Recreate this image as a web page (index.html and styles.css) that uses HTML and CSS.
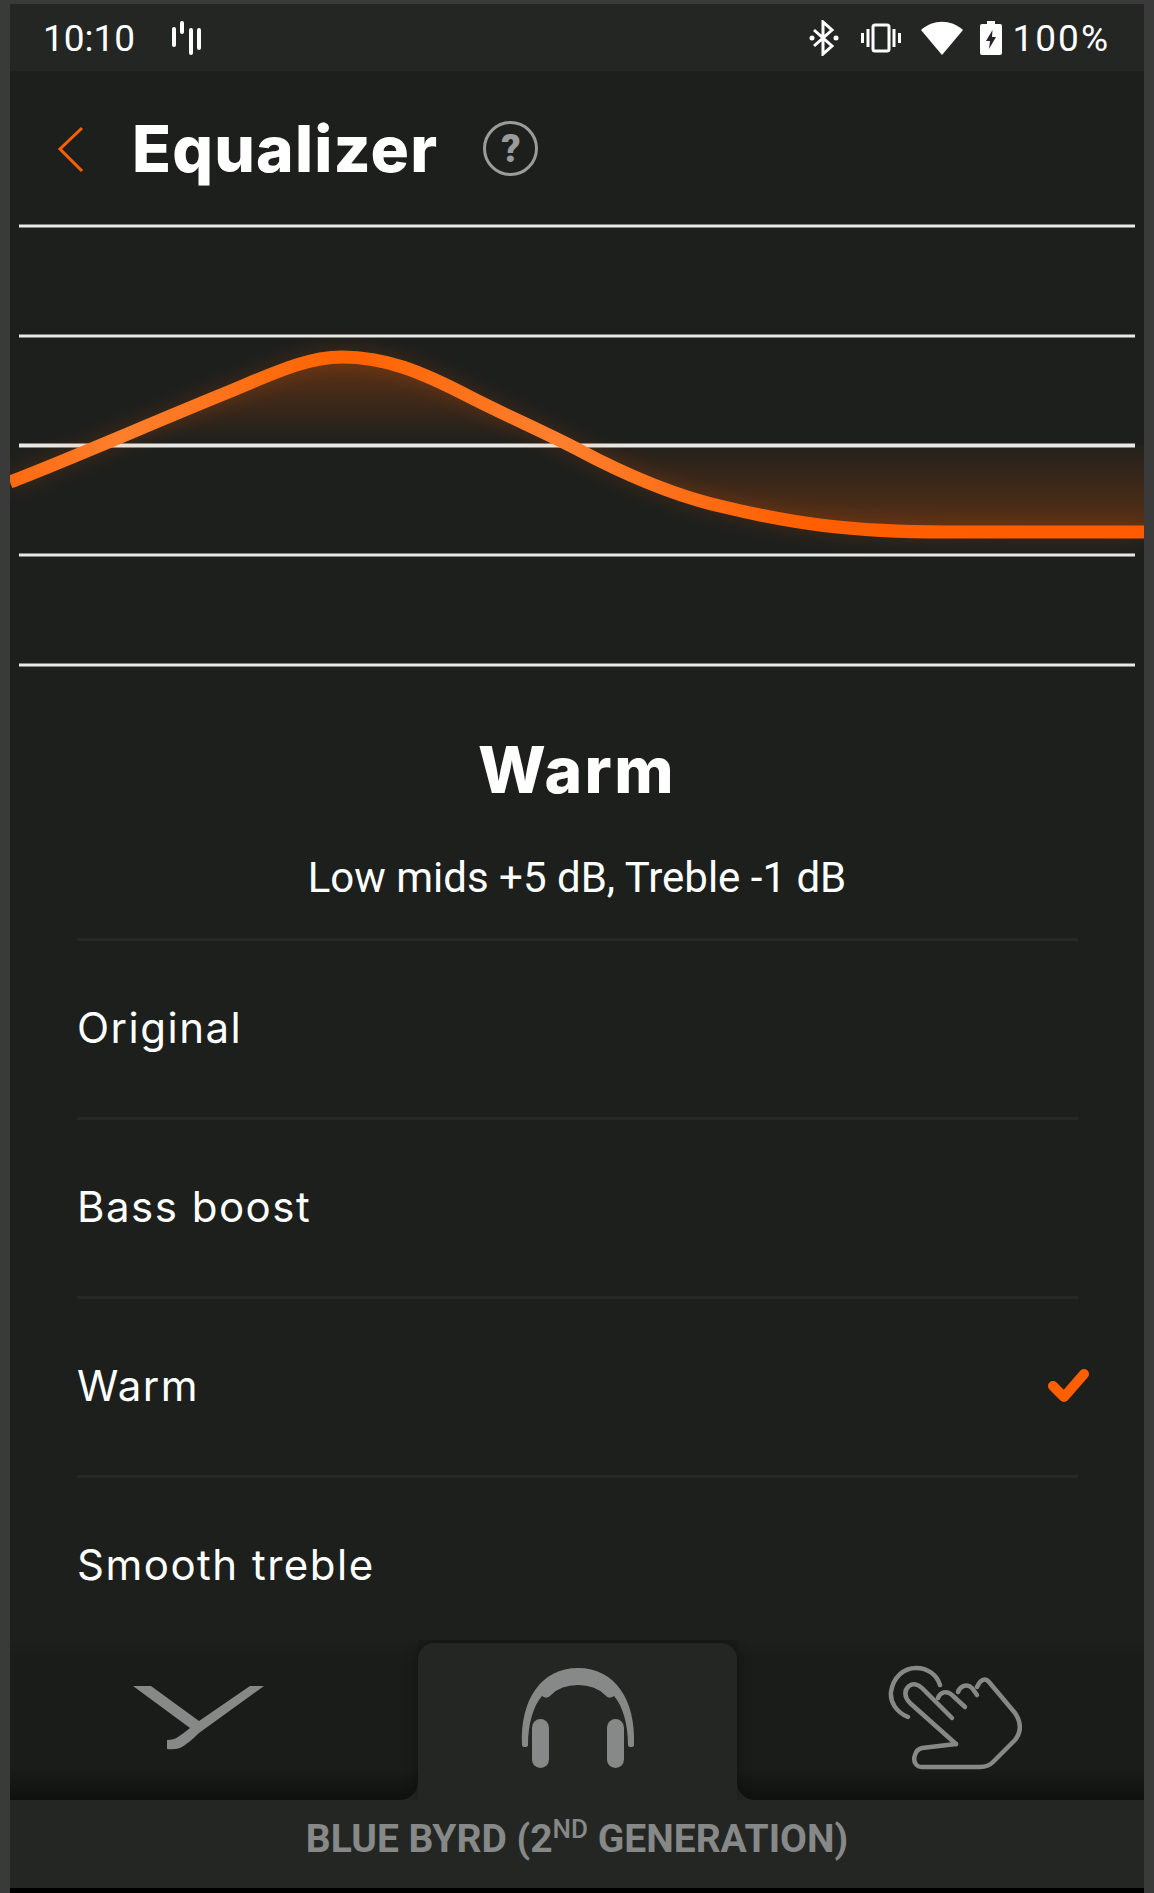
FILE: index.html
```html
<!DOCTYPE html>
<html lang="en">
  <head>
    <meta charset="UTF-8" />
    <meta name="viewport" content="width=device-width, initial-scale=1.0" />
    <title>Equalizer</title>
    <link rel="stylesheet" href="styles.css">
  </head>
  <body>
    <div class="phone">
      <div class="status-bar">
        <div class="status-left">
          <span class="clock">10:10</span>
          <svg class="ic-bars" width="30" height="34" viewBox="0 0 30 34">
            <g fill="none" stroke="#fff" stroke-width="4" stroke-linecap="round">
              <path d="M3 8V24M11 2V11M20 9V32M28 9V27" />
            </g>
          </svg>
        </div>
        <div class="status-right">
          <svg class="ic-bt" width="30" height="36" viewBox="0 0 30 36">
            <path d="M5 10L23 26L14 34V2L23 10L5 26" fill="none" stroke="#fff" stroke-width="3" />
            <circle cx="3" cy="18" r="2.5" fill="#fff" />
            <circle cx="27" cy="18" r="2.5" fill="#fff" />
          </svg>
          <svg class="ic-vib" width="40" height="30" viewBox="0 0 40 30">
            <rect x="12" y="2" width="16" height="26" rx="2" fill="none" stroke="#fff" stroke-width="3" />
            <path d="M7 6V24M33 6V24M1.500 10V20M38.500 10V20" stroke="#fff" stroke-width="3" />
          </svg>
          <svg class="ic-wifi" width="42" height="34" viewBox="0 0 42 34">
            <path d="M0 9C12 -2 30 -2 42 9L21 34Z" fill="#fff" />
          </svg>
          <svg class="ic-batt" width="22" height="34" viewBox="0 0 22 34">
            <path d="M7 0H15V3H20Q22 3 22 5V32Q22 34 20 34H2Q0 34 0 32V5Q0 3 2 3H7Z" fill="#fff" />
            <path d="M12.500 9L6 20H10L9 28L16 16H12Z" fill="#242624" />
          </svg>
          <span class="battery-level">100%</span>
        </div>
      </div>

      <div class="header">
        <svg class="ic-back" width="28" height="48" viewBox="0 0 28 48">
          <path d="M25 3L3 24L25 46" fill="none" stroke="#ff5f00" stroke-width="3" />
        </svg>
        <h1>Equalizer</h1>
        <span class="help">?</span>
      </div>

      <svg class="chart" width="1134" height="540" viewBox="10 180 1134 540">
        <defs>
          <linearGradient id="glowUp" gradientUnits="userSpaceOnUse" x1="0" y1="357" x2="0" y2="445">
            <stop offset="0" stop-color="#ff5f00" stop-opacity="0.3" />
            <stop offset="1" stop-color="#ff5f00" stop-opacity="0" />
          </linearGradient>
          <linearGradient id="glowDown" gradientUnits="userSpaceOnUse" x1="0" y1="445" x2="0" y2="532">
            <stop offset="0" stop-color="#ff5f00" stop-opacity="0.03" />
            <stop offset="1" stop-color="#ff5f00" stop-opacity="0.27" />
          </linearGradient>
          <linearGradient id="curveColor" gradientUnits="userSpaceOnUse" x1="10" y1="0" x2="1144" y2="0">
            <stop offset="0" stop-color="#ff6a10" />
            <stop offset="0.1" stop-color="#ff7f2c" />
            <stop offset="0.3" stop-color="#ff6200" />
            <stop offset="0.48" stop-color="#ff7f2e" />
            <stop offset="0.7" stop-color="#ff5f00" />
            <stop offset="1" stop-color="#ff5a00" />
          </linearGradient>
          <filter id="soft" x="-5%" y="-20%" width="110%" height="140%">
            <feGaussianBlur stdDeviation="10" />
          </filter>
        </defs>
        <path d="M10 445V482C60 463 150 424 221 395C270 375 305 357 342 357C385 357 420 371 470 397C505 415 530 430 560 445Z" fill="url(#glowUp)" />
        <path d="M560 445C600 465 670 495 724 507C790 523 850 532 945 532H1144V445Z" fill="url(#glowDown)" />
        <g stroke="#e9e9e5" stroke-width="3">
          <path d="M19 226H1135" />
          <path d="M19 336H1135" />
          <path d="M19 445.500H1135" stroke-width="4" />
          <path d="M19 555H1135" />
          <path d="M19 665H1135" />
        </g>
        <path class="curve-glow" d="M10 482C60 463 150 424 221 395C270 375 305 357 342 357C385 357 420 371 470 397C505 415 540 430 577 449C620 472 670 495 724 507C790 523 850 532 945 532H1144" filter="url(#soft)" />
        <path class="curve" d="M10 482C60 463 150 424 221 395C270 375 305 357 342 357C385 357 420 371 470 397C505 415 540 430 577 449C620 472 670 495 724 507C790 523 850 532 945 532H1144" />
      </svg>

      <div class="preset">
        <h2>Warm</h2>
        <p>Low mids +5 dB, Treble -1 dB</p>
      </div>

      <div class="preset-list">
        <div class="preset-row">Original</div>
        <div class="preset-row">Bass boost</div>
        <div class="preset-row">
          Warm
          <svg class="ic-check" width="46" height="40" viewBox="0 0 46 40">
            <path d="M7 21L18 32L38 9" fill="none" stroke="#ff5f00" stroke-width="10" stroke-linecap="round" stroke-linejoin="round" />
          </svg>
        </div>
        <div class="preset-row">Smooth treble</div>
      </div>

      <div class="tabs">
        <div class="tab tab-left">
          <svg width="134" height="66" viewBox="132 1685 134 66">
            <path d="M133 1686H151L199 1721L250 1686H264L199 1733Q188 1744 180 1748Q174 1750 167 1749V1740Q174 1740 178 1737Q184 1733 190 1728Z" fill="#868987" />
          </svg>
        </div>
        <div class="tab tab-active">
          <svg width="116" height="104" viewBox="519 1666 116 104">
            <path d="M521 1745C519 1700 540 1668 577 1668C614 1668 635 1700 633 1745Q633 1747 630 1747Q627 1747 627 1745C627 1725 622 1706 613 1696Q608 1700 604 1695Q594 1685 577 1685Q560 1685 550 1695Q546 1700 541 1696C532 1706 527 1725 527 1745Q527 1747 524 1747Q521 1747 521 1745Z" fill="#868987" />
            <rect x="531" y="1719" width="17" height="49" rx="8.500" fill="#868987" />
            <rect x="606" y="1719" width="17" height="49" rx="8.500" fill="#868987" />
          </svg>
        </div>
        <div class="tab tab-right">
          <svg width="134" height="106" viewBox="888 1665 134 106">
            <g fill="none" stroke="#868987" stroke-width="4.500" stroke-linecap="round" stroke-linejoin="round">
              <path d="M908 1717C896 1712 890 1702 891 1692C893 1677 904 1668 916 1668C928 1668 937 1675 940 1685" />
              <path d="M956 1744L910 1703C904 1697 904 1690 909 1686C913 1683 918 1684 922 1688L952 1718" />
              <path d="M938 1698C940 1692 947 1690 952 1695L965 1707" />
              <path d="M958 1692C960 1686 967 1683 972 1688L977 1695" />
              <path d="M977 1687C980 1680 985 1677 989 1682L1015 1713C1021 1722 1022 1731 1015 1740L993 1762C989 1766 985 1767 980 1767H922C915 1767 913 1760 915 1755C916 1751 918 1749 922 1748L956 1744" />
            </g>
          </svg>
        </div>
      </div>

      <div class="device-name">BLUE BYRD (2<sup>ND</sup> GENERATION)</div>
      <div class="bottom-edge"></div>
    </div>
  </body>
</html>
```

FILE: styles.css
```css
* {
  margin: 0;
  padding: 0;
  box-sizing: border-box;
}
html,
body {
  height: 1893px;
  overflow: hidden;
}
body {
  background-color: #3a3a3a;
  font-family: "Roboto", sans-serif;
  color: #fff;
}

.phone {
  display: flex;
  flex-direction: column;
  height: 1889px;
  margin: 4px 10px 0;
  background-color: #1d1f1d;
}

.status-bar {
  display: flex;
  justify-content: space-between;
  align-items: center;
  flex: none;
  height: 67px;
  padding: 1px 34px 0 33px;
  background-color: #242624;
}
.status-left,
.status-right {
  display: flex;
  align-items: center;
}
.clock,
.battery-level {
  font-size: 37px;
  line-height: 1;
}
.battery-level {
  margin-left: 11px;
  letter-spacing: 2px;
}
.ic-bars {
  margin-left: 36px;
}
.ic-vib {
  margin-left: 22px;
}
.ic-wifi {
  margin-left: 20px;
}
.ic-batt {
  margin-left: 17px;
}

.header {
  display: flex;
  align-items: center;
  flex: none;
  height: 109px;
  padding: 46px 0 0 47px;
}
h1 {
  margin-left: 47px;
  font-family: "Inter", sans-serif;
  font-size: 64px;
  font-weight: 800;
  letter-spacing: 1.2px;
  line-height: 1;
}
.help {
  display: flex;
  justify-content: center;
  align-items: center;
  width: 55px;
  height: 55px;
  margin-left: 45px;
  border: 3px solid #9a9c9a;
  border-radius: 50%;
  color: #9a9c9a;
  font-size: 38px;
  font-weight: 900;
}

.chart {
  display: block;
  flex: none;
}
.curve,
.curve-glow {
  fill: none;
  stroke-width: 13;
}
.curve {
  stroke: url(#curveColor);
}
.curve-glow {
  stroke: #ff5f00;
  opacity: 0.2;
}

.preset {
  flex: none;
  height: 218px;
  text-align: center;
}
h2 {
  padding-top: 14px;
  font-family: "Inter", sans-serif;
  font-size: 64px;
  font-weight: 800;
  letter-spacing: 2.5px;
  line-height: 72px;
}
.preset p {
  margin-top: 47px;
  font-size: 42px;
  line-height: 50px;
}

.preset-list {
  flex: 1;
  min-height: 0;
  overflow: hidden;
  padding: 0 66px 0 67px;
}
.preset-row {
  display: flex;
  justify-content: space-between;
  align-items: center;
  height: 179px;
  padding-bottom: 4px;
  border-top: 3px solid #262826;
  font-family: "Inter", sans-serif;
  font-size: 42px;
  letter-spacing: 1.5px;
}
.ic-check {
  margin-right: -14px;
}

.tabs {
  display: flex;
  flex: none;
  height: 160px;
  overflow: hidden;
  background: linear-gradient(#1a1c1a 50%, #242624 50%);
}
.tab {
  display: flex;
  justify-content: center;
  align-items: center;
}
.tab-left,
.tab-right {
  background: linear-gradient(#1d1f1d, #1a1c1a 12%, #1a1c1a 80%, #0f110f);
}
.tab-left {
  width: 408px;
  padding: 0 31px 4px 0;
  border-bottom-right-radius: 18px;
}
.tab-right {
  width: 407px;
  padding: 0 0 4px 29px;
  border-bottom-left-radius: 18px;
}
.tab-active {
  position: relative;
  width: 319px;
  margin-top: 3px;
  padding-bottom: 7px;
  background-color: #242624;
  border-radius: 16px 16px 0 0;
  box-shadow: 0 0 14px rgba(0, 0, 0, 0.35);
}

.device-name {
  flex: none;
  height: 88px;
  padding-top: 16px;
  background-color: #242624;
  color: #868987;
  font-size: 39px;
  font-weight: 700;
  line-height: 46px;
  text-align: center;
}
.device-name sup {
  font-size: 26px;
  font-weight: 500;
  line-height: 0;
}

.bottom-edge {
  flex: none;
  height: 5px;
  background-color: #000;
}
```
